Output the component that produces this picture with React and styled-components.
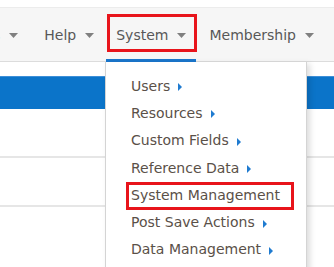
import React from "react"
import styled, { createGlobalStyle } from "styled-components"

const GlobalStyle = createGlobalStyle`
  html, body {
    margin: 0;
    padding: 0;
    background: #fff;
    font-family: "DejaVu Sans", Verdana, sans-serif;
  }
`;

const navItems = [
  { label: "Help", active: false },
  { label: "System", active: true },
  { label: "Membership", active: false },
];

const menuItems = [
  { label: "Users", sub: true },
  { label: "Resources", sub: true },
  { label: "Custom Fields", sub: true },
  { label: "Reference Data", sub: true },
  { label: "System Management", sub: false, marked: true },
  { label: "Post Save Actions", sub: true },
  { label: "Data Management", sub: true },
];

const Caret = () => (
  <CaretSvg width="9" height="5" viewBox="0 0 9 5">
    <path d="M0 0 L9 0 L4.5 5 Z" fill="#808080" />
  </CaretSvg>
);

const SubArrow = () => (
  <ArrowSvg width="4" height="8" viewBox="0 0 4 8">
    <path d="M0 0 L4 4 L0 8 Z" fill="#1f7bd0" />
  </ArrowSvg>
);

const App = () => {
  return (
    <Page>
      <GlobalStyle />
      <NavBar>
        <NavItem>
          <Clipped>s</Clipped>
          <Caret />
        </NavItem>
        {navItems.map((item) => (
          <NavItem key={item.label} active={item.active}>
            {item.label}
            <Caret />
          </NavItem>
        ))}
      </NavBar>
      <Content>
        <BlueBand />
        <Row />
        <Row />
        <Dropdown>
          {menuItems.map((item) => (
            <MenuItem key={item.label} marked={item.marked}>
              {item.label}
              {item.sub && <SubArrow />}
            </MenuItem>
          ))}
        </Dropdown>
      </Content>
    </Page>
  )
};
export default App

const Page = styled.div`
  width: 334px;
  height: 267px;
  overflow: hidden;
  padding-top: 7px;
  box-sizing: border-box;
`;

const NavBar = styled.div`
  height: 55px;
  box-sizing: border-box;
  background: #f6f6f6;
  border-top: 1px solid #ececec;
  border-bottom: 1px solid #dcdcdc;
  display: flex;
  align-items: stretch;
`;

const NavItem = styled.div`
  position: relative;
  display: flex;
  align-items: center;
  gap: 9px;
  padding: ${(p) => (p.active ? "0 10px 0 9px" : "0 13px")};
  font-size: 14px;
  color: #585858;
  white-space: nowrap;
  ${(p) =>
    p.active &&
    `
    &::before {
      content: "";
      position: absolute;
      left: 0;
      right: -1px;
      top: 6px;
      bottom: 9px;
      border: 3px solid #e8141b;
    }
    &::after {
      content: "";
      position: absolute;
      left: -1px;
      right: 0;
      bottom: -1px;
      height: 3px;
      background: #1a76cc;
    }
  `}
`;

const Clipped = styled.span`
  color: #4a90d0;
  margin-left: -20px;
`;

const CaretSvg = styled.svg`
  flex: 0 0 auto;
  margin-top: 1px;
`;

const Content = styled.div`
  position: relative;
  height: 205px;
  padding-top: 14px;
  box-sizing: border-box;
`;

const BlueBand = styled.div`
  height: 32px;
  background: #0b74c9;
  border-top: 1px solid #3d8fd8;
`;

const Row = styled.div`
  height: 47px;
  border-bottom: 2px solid #e6e6e6;
  &:last-of-type {
    height: 37px;
  }
`;

const Dropdown = styled.div`
  position: absolute;
  left: 105px;
  top: 0;
  width: 202px;
  height: 220px;
  background: #fff;
  border: 1px solid #d4d4d4;
  border-top: none;
  box-shadow: 3px 2px 6px rgba(0, 0, 0, 0.14);
  padding: 10px 0 0 25px;
  box-sizing: border-box;
  display: flex;
  flex-direction: column;
`;

const MenuItem = styled.div`
  position: relative;
  height: 27.3px;
  display: flex;
  align-items: center;
  gap: 8px;
  font-size: 14px;
  color: #5a5048;
  white-space: nowrap;
  ${(p) =>
    p.marked &&
    `
    &::before {
      content: "";
      position: absolute;
      left: -5px;
      top: 1px;
      width: 168px;
      height: 28px;
      box-sizing: border-box;
      border: 3px solid #e8141b;
    }
  `}
`;

const ArrowSvg = styled.svg`
  flex: 0 0 auto;
  margin-top: 3px;
`;
